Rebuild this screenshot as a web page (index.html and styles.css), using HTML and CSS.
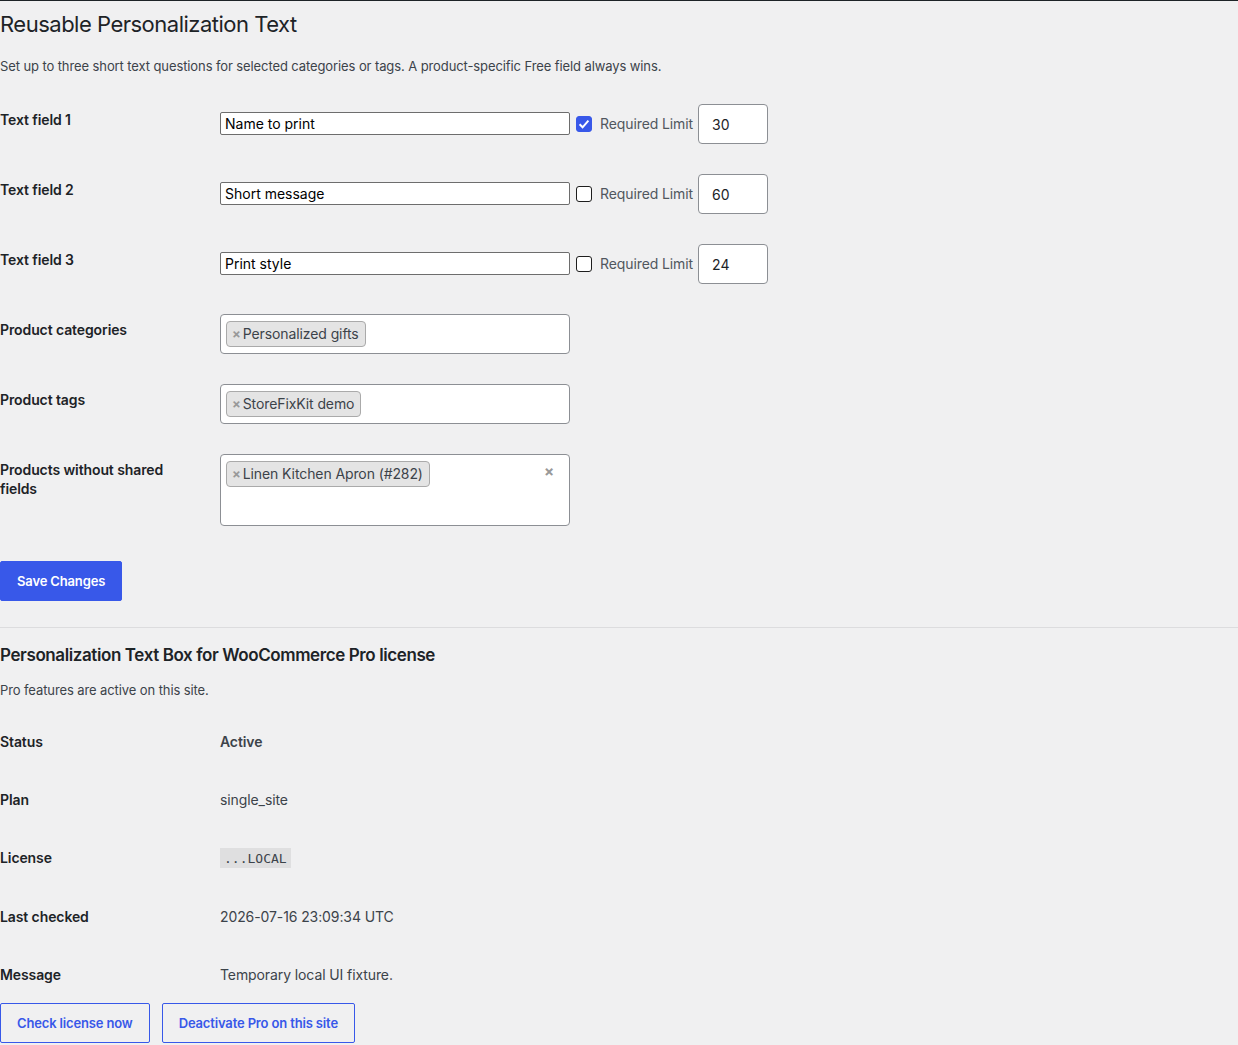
FILE: index.html
```html
<!DOCTYPE html>
<html lang="en">
<head>
    <meta charset="UTF-8">
    <meta name="viewport" content="width=device-width, initial-scale=1.0">
    <title>Reusable Personalization Text</title>
    <link rel="stylesheet" href="styles.css">
</head>
<body>
    <div class="wrap">
        <h1>Reusable Personalization Text</h1>
        <p class="intro">Set up to three short text questions for selected categories or tags. A product-specific Free field always wins.</p>

        <form>
            <table class="form-table">
                <tr>
                    <th>Text field 1</th>
                    <td>
                        <div class="field-row">
                            <input type="text" class="text-input" value="Name to print">
                            <span class="check is-checked">
                                <svg viewBox="0 0 16 16" width="16" height="16"><path d="M3.6 8.3l3 3 5.8-6.6" fill="none" stroke="#fff" stroke-width="2"/></svg>
                            </span>
                            <span class="req-label">Required Limit</span>
                            <input type="text" class="limit-input" value="30">
                        </div>
                    </td>
                </tr>
                <tr>
                    <th>Text field 2</th>
                    <td>
                        <div class="field-row">
                            <input type="text" class="text-input" value="Short message">
                            <span class="check"></span>
                            <span class="req-label">Required Limit</span>
                            <input type="text" class="limit-input" value="60">
                        </div>
                    </td>
                </tr>
                <tr>
                    <th>Text field 3</th>
                    <td>
                        <div class="field-row">
                            <input type="text" class="text-input" value="Print style">
                            <span class="check"></span>
                            <span class="req-label">Required Limit</span>
                            <input type="text" class="limit-input" value="24">
                        </div>
                    </td>
                </tr>
                <tr>
                    <th>Product categories</th>
                    <td>
                        <div class="multi-select">
                            <span class="chip"><span class="chip-x">×</span>Personalized gifts</span>
                        </div>
                    </td>
                </tr>
                <tr>
                    <th>Product tags</th>
                    <td>
                        <div class="multi-select">
                            <span class="chip"><span class="chip-x">×</span>StoreFixKit demo</span>
                        </div>
                    </td>
                </tr>
                <tr>
                    <th>Products without shared fields</th>
                    <td>
                        <div class="multi-select tall">
                            <span class="chip"><span class="chip-x">×</span>Linen Kitchen Apron (#282)</span>
                            <span class="clear-x">×</span>
                        </div>
                    </td>
                </tr>
            </table>

            <p class="submit"><button type="button" class="button-primary">Save Changes</button></p>
        </form>

        <hr>

        <h2>Personalization Text Box for WooCommerce Pro license</h2>
        <p class="license-intro">Pro features are active on this site.</p>

        <table class="form-table license-table">
            <tr>
                <th>Status</th>
                <td><strong>Active</strong></td>
            </tr>
            <tr>
                <th>Plan</th>
                <td>single_site</td>
            </tr>
            <tr>
                <th>License</th>
                <td><code>...LOCAL</code></td>
            </tr>
            <tr>
                <th>Last checked</th>
                <td>2026-07-16 23:09:34 UTC</td>
            </tr>
            <tr>
                <th>Message</th>
                <td>Temporary local UI fixture.</td>
            </tr>
        </table>

        <div class="license-actions">
            <button type="button" class="button-secondary">Check license now</button>
            <button type="button" class="button-secondary">Deactivate Pro on this site</button>
        </div>
    </div>
</body>
</html>
```

FILE: styles.css
```css
body {
    margin: 0;
    background-color: #f0f0f1;
    color: #3c434a;
    font-family: Inter, "Noto Sans", sans-serif;
    font-size: 13px;
    line-height: 1.4;
    letter-spacing: -0.1px;
    border-top: 1px solid #1d2327;
}
.wrap {
    margin: 0;
}
h1 {
    margin: 0;
    padding: 9px 0 4px;
    font-size: 22px;
    font-weight: 400;
    line-height: 1.36;
    letter-spacing: -0.5px;
    color: #1d2327;
}
p {
    font-size: 13px;
    line-height: 1.5;
    margin: 13px 0;
}
.form-table {
    border-collapse: collapse;
    width: 100%;
    margin-top: 7px;
    font-size: 14px;
}
.form-table th {
    width: 200px;
    padding: 22px 10px 18px 0;
    text-align: left;
    vertical-align: top;
    font-weight: 600;
    line-height: 1.3;
    color: #1d2327;
}
.form-table td {
    padding: 15px 10px;
    vertical-align: top;
    line-height: 1.3;
}
.field-row {
    display: flex;
    align-items: center;
}
.text-input {
    box-sizing: border-box;
    align-self: flex-start;
    width: 350px;
    height: 23px;
    margin: 8px 0 0;
    padding: 0 4px;
    border: 1px solid #6d6d6d;
    border-radius: 2px;
    background: #fff;
    font-family: inherit;
    font-size: 14px;
    color: #000;
}
.check {
    box-sizing: border-box;
    display: inline-flex;
    width: 16px;
    height: 16px;
    margin-left: 6px;
    border: 1px solid #1e1e1e;
    border-radius: 3px;
    background: #fff;
}
.check.is-checked {
    background: #3858e9;
    border-color: #3858e9;
}
.check svg {
    margin: -1px;
}
.req-label {
    margin-left: 8px;
    color: #50575e;
}
.limit-input {
    box-sizing: border-box;
    width: 70px;
    height: 40px;
    margin-left: 5px;
    padding: 0 13px;
    border: 1px solid #8c8f94;
    border-radius: 4px;
    background: #fff;
    font-family: inherit;
    font-size: 14px;
    color: #1d2327;
}
.multi-select {
    box-sizing: border-box;
    position: relative;
    width: 350px;
    height: 40px;
    padding: 6px 5px;
    border: 1px solid #8c8f94;
    border-radius: 4px;
    background: #fff;
}
.multi-select.tall {
    height: 72px;
}
.chip {
    display: inline-flex;
    align-items: center;
    box-sizing: border-box;
    height: 26px;
    padding: 0 6px 0 5px;
    border: 1px solid #aaa;
    border-radius: 4px;
    background: #e4e4e4;
    color: #3c434a;
    font-size: 14px;
}
.chip-x {
    margin-right: 2px;
    color: #999;
    font-weight: 700;
    font-size: 13px;
}
.clear-x {
    position: absolute;
    top: 7px;
    right: 15px;
    color: #999;
    font-weight: 700;
    font-size: 15px;
}
.submit {
    margin: 20px 0 26px;
    padding: 0;
}
.button-primary,
.button-secondary {
    box-sizing: border-box;
    height: 40px;
    padding: 0 16px;
    border-radius: 2px;
    font-family: inherit;
    font-size: 13px;
    font-weight: 600;
    letter-spacing: -0.15px;
    cursor: pointer;
}
.button-primary {
    background: #3858e9;
    border: 1px solid #3858e9;
    color: #fff;
}
.button-secondary {
    background: transparent;
    border: 1px solid #3858e9;
    color: #3858e9;
}
hr {
    margin: 0;
    border: 0;
    border-top: 1px solid #dcdcde;
}
h2 {
    margin: 16px 0 14px;
    font-size: 17px;
    font-weight: 600;
    line-height: 1.3;
    letter-spacing: -0.4px;
    color: #1d2327;
}
.license-intro {
    margin-top: 0;
}
.license-table {
    margin-top: 0;
}
.license-table th {
    padding: 20px 10px 20px 0;
}
.license-table td {
    padding: 20px 10px;
    color: #3c434a;
}
.license-table strong {
    font-weight: 600;
    color: #3c434a;
}
code {
    padding: 3px 4px 2px;
    background: rgba(0, 0, 0, 0.07);
    font-family: "DejaVu Sans Mono", monospace;
    font-size: 13px;
    letter-spacing: 0;
    color: #3c434a;
}
.license-actions {
    display: flex;
    gap: 12px;
    margin-top: -2px;
}
```
